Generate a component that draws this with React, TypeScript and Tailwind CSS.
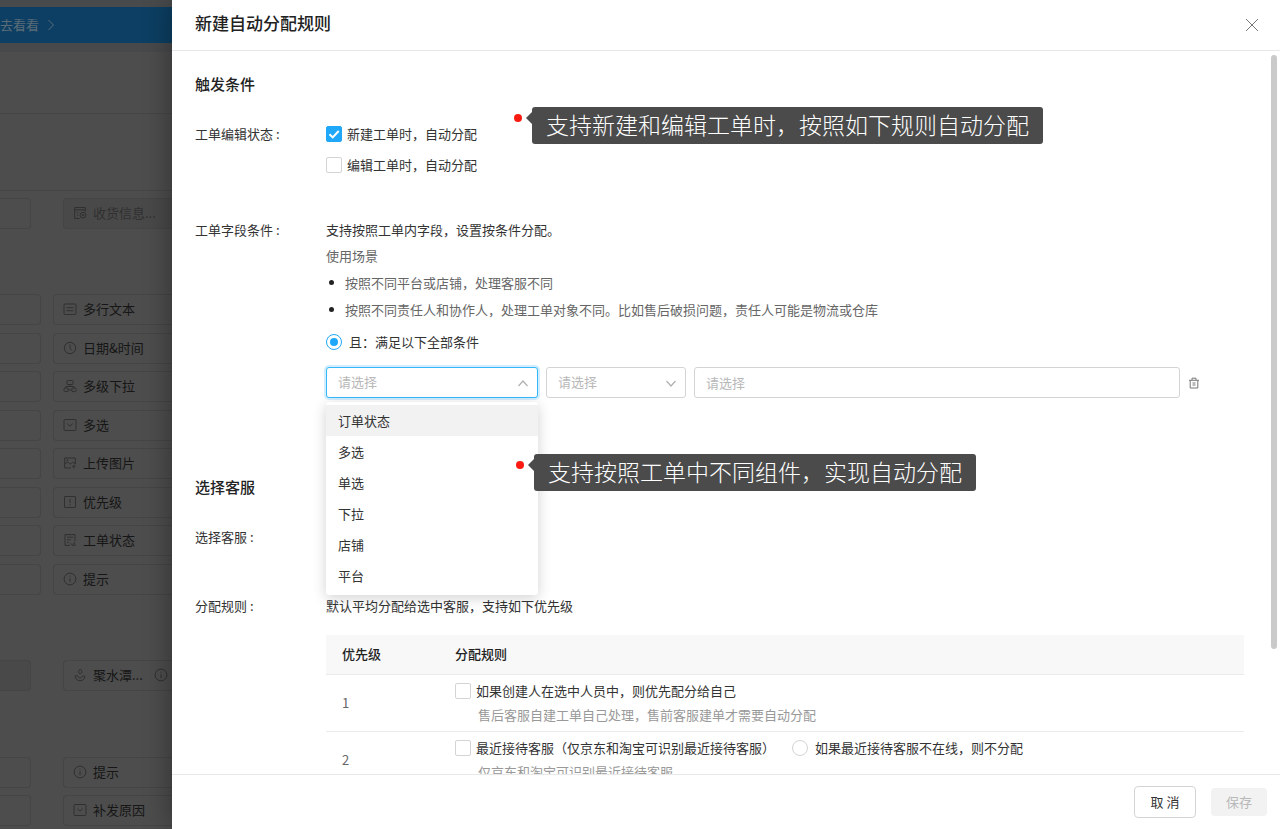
import React, { useState } from "react";

const iconPaths: Record<string, React.ReactNode> = {
  text: (
    <>
      <rect x="1" y="2" width="12" height="10.5" rx="1" />
      <path d="M3.5 5.7h7M3.5 8.7h7" />
    </>
  ),
  clock: (
    <>
      <circle cx="7" cy="7" r="5.7" />
      <path d="M7 3.5V7l1.8 2.4" />
    </>
  ),
  tree: (
    <>
      <rect x="4" y="1.5" width="6" height="4" rx="0.8" />
      <rect x="1" y="9" width="4.2" height="3.6" rx="1.2" />
      <rect x="8.8" y="9" width="4.2" height="3.6" rx="1.2" />
      <path d="M7 5.5v2M3.1 9V7.5h7.8V9M5.2 11h3.6" />
    </>
  ),
  multi: (
    <>
      <rect x="1" y="1.5" width="12" height="11" rx="1" />
      <path d="M4.2 5.6 7 8.2l2.8-2.6" />
    </>
  ),
  image: (
    <>
      <path d="M8 12H1.7V2h10.6v6.4" />
      <path d="M1.7 7.8 4.8 6l2.6 2.2L9.6 6.4l2.7 1M10.8 12.6V9.4M9.2 10.8l1.6-1.6 1.6 1.6" />
      <circle cx="4.3" cy="4.2" r="0.5" />
    </>
  ),
  priority: (
    <>
      <rect x="1.5" y="1.5" width="11" height="11" rx="0.5" />
      <path d="M7 3.8v4M7 9.2v1.2" />
    </>
  ),
  status: (
    <>
      <path d="M12 8V1.6H2v10.8h5" />
      <path d="M4 4.2h6M4 6.8h4M4 9.4h2M7.5 10.2l1.7 1.8 2.8-3" />
      <path d="M12 10.5v2H9.6" />
    </>
  ),
  info: (
    <>
      <circle cx="7" cy="7" r="5.9" />
      <path d="M7 6.2v4M7 3.8v1" />
    </>
  ),
  receive: (
    <>
      <path d="M12.300 5.500V1.500H1.700v11h5" />
      <path d="M1.700 3.900h10.600M4 6.500h1.200M4 9.200h1.200" />
      <circle cx="10" cy="9.200" r="2.900" />
      <circle cx="10" cy="9.200" r="0.800" />
    </>
  ),
  water: (
    <>
      <path d="M7.300 1c-1.400 1.500-1.900 2.500-1.700 3.400.3 1.500 2.900 1.500 3.300 0 .2-.9-.3-1.900-1.600-3.400Z" />
      <path d="M2.300 7.800c0 3 1.900 5 4.700 5s4.800-2 4.900-4.600c-1.600-.6-2.700-.1-3.300.9-.8 1.200-2.300 1.200-2.900 0C5.100 8 4 7.400 2.300 7.800Z" />
    </>
  ),
};

const FieldIcon = ({ name }: { name: string }) => (
  <svg
    viewBox="0 0 14 14"
    className="size-[14px] shrink-0 fill-none stroke-[#303030]"
    aria-hidden="true"
  >
    {iconPaths[name]}
  </svg>
);

const fields = [
  { name: "多行文本", icon: "text" },
  { name: "日期&时间", icon: "clock" },
  { name: "多级下拉", icon: "tree" },
  { name: "多选", icon: "multi" },
  { name: "上传图片", icon: "image" },
  { name: "优先级", icon: "priority" },
  { name: "工单状态", icon: "status" },
  { name: "提示", icon: "info" },
];

const options = ["订单状态", "多选", "单选", "下拉", "店铺", "平台"];

type FieldProps = {
  name: string;
  icon: string;
  disabled?: boolean;
  leftDisabled?: boolean;
  tip?: boolean;
};

// A pair of cards: the cut off left one and the one next to the drawer
const WideRow = ({ name, icon }: FieldProps) => (
  <div className="flex h-[31px] gap-3">
    <div className="w-[41px] shrink-0 rounded-r border border-l-0 border-[#454545]" />
    <div className="flex flex-1 items-center gap-[6px] rounded-l border border-r-0 border-[#454545] pb-px pl-[9px]">
      <FieldIcon name={icon} />
      <span className="whitespace-nowrap text-[#161616]">{name}</span>
    </div>
  </div>
);

const NarrowRow = ({ name, icon, disabled, leftDisabled, tip }: FieldProps) => (
  <div className="flex h-[31px] gap-8">
    <div
      className={`w-[31px] shrink-0 rounded-r border border-l-0 border-[#454545] ${leftDisabled ? "bg-[#494949]" : ""}`}
    />
    <div
      className={`flex flex-1 items-center gap-[6px] rounded-l border border-r-0 border-[#454545] pb-px pl-[9px] ${disabled ? "bg-[#494949]" : ""}`}
    >
      <FieldIcon name={icon} />
      <span
        className={`whitespace-nowrap ${disabled ? "text-[#303030]" : "text-[#161616]"}`}
      >
        {name}
      </span>
      {tip && (
        <span className="ml-[5px] flex">
          <FieldIcon name="info" />
        </span>
      )}
    </div>
  </div>
);

const Backdrop = () => (
  <aside className="flex w-[172px] shrink-0 flex-col overflow-hidden bg-[#4d4d4d]">
    <div className="h-[7px] shrink-0 bg-[#484a4c]" />
    <div className="flex h-9 shrink-0 items-center gap-2 bg-[#0c3f63] text-[#5b6c78]">
      <span>去看看</span>
      <svg viewBox="0 0 8 12" className="h-3 w-2 fill-none stroke-current">
        <path d="m1.5 1 5 5-5 5" />
      </svg>
    </div>
    <div className="h-[9px] shrink-0 bg-[#48494b]" />
    <div className="h-[61px] shrink-0" />
    <div className="h-[78px] shrink-0 border-y border-[#464646]" />
    <div className="flex flex-col pt-[7px]">
      <NarrowRow name="收货信息..." icon="receive" disabled />
      <div className="mt-[65px] flex h-[301px] flex-col justify-between">
        {fields.map((item) => (
          <WideRow key={item.name} {...item} />
        ))}
      </div>
      <div className="mt-[65px]">
        <NarrowRow name="聚水潭..." icon="water" leftDisabled tip />
      </div>
      <div className="mt-[66px] flex flex-col gap-[7px]">
        <NarrowRow name="提示" icon="info" />
        <NarrowRow name="补发原因" icon="multi" />
      </div>
    </div>
  </aside>
);

const Checkbox = ({
  label,
  defaultChecked,
}: {
  label: string;
  defaultChecked?: boolean;
}) => (
  <label className="flex items-center gap-[5px]">
    <span className="relative flex size-4">
      <input
        type="checkbox"
        defaultChecked={defaultChecked}
        className="peer size-4 appearance-none rounded-[2px] border border-[#d4d4d4] bg-white checked:border-[#1fa8fa] checked:bg-[#1fa8fa]"
      />
      <svg
        viewBox="0 0 16 16"
        className="pointer-events-none absolute inset-0 hidden size-4 fill-none stroke-white stroke-2 peer-checked:block"
      >
        <path d="m3.5 8.2 3.2 3.2 6-6.4" />
      </svg>
    </span>
    {label}
  </label>
);

const Radio = ({
  label,
  name,
  defaultChecked,
}: {
  label: string;
  name: string;
  defaultChecked?: boolean;
}) => (
  <label className="flex items-center gap-[7px]">
    <span className="relative flex size-4 items-center justify-center">
      <input
        type="radio"
        name={name}
        defaultChecked={defaultChecked}
        className="peer size-4 appearance-none rounded-full border border-[#d4d4d4] bg-white checked:border-[#1fa8fa]"
      />
      <span className="pointer-events-none absolute hidden size-2 rounded-full bg-[#1fa8fa] peer-checked:block" />
    </span>
    {label}
  </label>
);

const Note = ({ text }: { text: string }) => (
  <div className="flex items-start">
    <span className="mt-[7px] size-2 rounded-full bg-[#fb1a10]" />
    <svg viewBox="0 0 6 12" className="ml-1 mt-[5px] h-3 w-[6px] fill-[#4b4b4b]">
      <path d="M6 0v12L0 6Z" />
    </svg>
    <p className="whitespace-nowrap rounded-[3px] bg-[#4b4b4b] px-[14px] pb-[2px] text-[23px] font-light leading-[35px] text-white">
      {text}
    </p>
  </div>
);

const Chevron = ({ up }: { up?: boolean }) => (
  <svg
    viewBox="0 0 12 8"
    className="pointer-events-none absolute right-[9px] top-3 h-2 w-3 fill-none stroke-[#b0b0b0] stroke-[1.2]"
  >
    <path d={up ? "M1.500 7 6 2l4.500 5" : "M1.500 2 6 7l4.500-5"} />
  </svg>
);

const App = () => {
  const [active, setActive] = useState<string>("订单状态");

  return (
    <div className="flex h-screen overflow-hidden bg-[#4d4d4d] font-['Noto_Sans_CJK_SC',sans-serif] text-[13px] leading-[22px] text-[#333]">
      <Backdrop />

      <section className="relative flex min-w-0 flex-1 flex-col bg-white shadow-[-4px_0_24px_rgba(0,0,0,0.3)]">
        {/* Header */}
        <header className="flex h-[51px] shrink-0 items-center justify-between border-b border-[#e8e8e8] pl-[23px] pr-[22px]">
          <h1 className="pb-1 text-[17px] font-medium text-[#222]">
            新建自动分配规则
          </h1>
          <button aria-label="关闭">
            <svg viewBox="0 0 12 12" className="size-3 fill-none stroke-[#777]">
              <path d="m0 0 12 12M12 0 0 12" />
            </svg>
          </button>
        </header>

        {/* Body */}
        <main className="relative min-h-0 flex-1 overflow-hidden pl-[23px] pr-9 pt-[21px]">
          <h2 className="text-[15px] font-medium leading-6 text-[#222]">
            触发条件
          </h2>

          <div className="mt-[22px] flex">
            <span className="w-[131px] shrink-0 leading-[31px]">
              工单编辑状态 :
            </span>
            <div className="relative flex-1">
              <div className="flex h-[31px] items-center">
                <Checkbox label="新建工单时，自动分配" defaultChecked />
              </div>
              <div className="flex h-[31px] items-center">
                <Checkbox label="编辑工单时，自动分配" />
              </div>
              <div className="absolute -top-[11px] left-[188px]">
                <Note text="支持新建和编辑工单时，按照如下规则自动分配" />
              </div>
            </div>
          </div>

          <div className="mt-9 flex">
            <span className="w-[131px] shrink-0 leading-[27px]">
              工单字段条件 :
            </span>
            <div className="min-w-0 flex-1">
              <p className="leading-[27px]">
                支持按照工单内字段，设置按条件分配。
              </p>
              <div className="text-[#666]">
                <p className="leading-[26px]">使用场景</p>
                <ul className="leading-[27px]">
                  {[
                    "按照不同平台或店铺，处理客服不同",
                    "按照不同责任人和协作人，处理工单对象不同。比如售后破损问题，责任人可能是物流或仓库",
                  ].map((item) => (
                    <li key={item} className="flex items-center">
                      <span className="ml-[3px] mr-[11px] size-[5px] rounded-full bg-[#222]" />
                      {item}
                    </li>
                  ))}
                </ul>
              </div>
              <div className="mt-2 flex">
                <Radio label="且：满足以下全部条件" name="match" defaultChecked />
              </div>
              <div className="mt-[14px] flex h-[31px] items-center gap-2">
                <div className="relative h-full w-[212px] shrink-0">
                  <select
                    aria-label="字段"
                    className="block h-full w-full appearance-none rounded-[3px] border border-[#34b8fb] bg-white px-[11px] pb-px text-[#b8b8b8] shadow-[0_0_0_2px_rgba(31,168,250,0.2)] outline-none"
                  >
                    <option>请选择</option>
                  </select>
                  <Chevron up />
                  <ul
                    role="listbox"
                    aria-label="字段"
                    className="absolute left-0 top-[35px] z-10 w-full rounded-[3px] bg-white pb-1 pt-[3px] shadow-[0_3px_14px_rgba(0,0,0,0.18)]"
                  >
                    {options.map((item) => (
                      <li
                        key={item}
                        role="option"
                        aria-selected={item === active}
                        onMouseEnter={() => setActive(item)}
                        className={`cursor-pointer px-3 leading-[31px] ${item === active ? "bg-[#f2f2f2]" : ""}`}
                      >
                        {item}
                      </li>
                    ))}
                  </ul>
                  <div className="absolute left-[190px] top-[87px] z-20">
                    <Note text="支持按照工单中不同组件，实现自动分配" />
                  </div>
                </div>
                <div className="relative h-full w-[140px] shrink-0">
                  <select
                    aria-label="条件"
                    className="block h-full w-full appearance-none rounded-[3px] border border-[#d4d4d4] bg-white px-[11px] pb-px text-[#b8b8b8] outline-none"
                  >
                    <option>请选择</option>
                  </select>
                  <Chevron />
                </div>
                <input
                  aria-label="值"
                  placeholder="请选择"
                  className="h-full min-w-0 flex-1 rounded-[3px] border border-[#d4d4d4] px-[11px] pb-px outline-none placeholder:text-[#b8b8b8]"
                />
                <button aria-label="删除" className="mr-11">
                  <svg
                    viewBox="0 0 12 12"
                    className="size-3 fill-none stroke-[#777]"
                  >
                    <path d="M1 3.3h10M4 3V1.2h4V3M2.2 3.5V11h7.600V3.5M4.500 6h3M4.500 8h3" />
                  </svg>
                </button>
              </div>
            </div>
          </div>

          <h2 className="mt-[77px] text-[15px] font-medium leading-6 text-[#222]">
            选择客服
          </h2>
          <p className="mt-[27px]">选择客服 :</p>

          <div className="mt-[47px] flex">
            <span className="w-[131px] shrink-0">分配规则 :</span>
            <div className="min-w-0 flex-1">
              <p>默认平均分配给选中客服，支持如下优先级</p>
              <table className="mt-[18px] w-full table-fixed text-left">
                <thead>
                  <tr className="h-[39px] border-b border-[#ebebeb] bg-[#f8f8f8] text-[#222]">
                    <th className="w-[113px] pl-4 font-medium">优先级</th>
                    <th className="pl-4 font-medium">分配规则</th>
                  </tr>
                </thead>
                <tbody>
                  <tr className="h-[57px] border-b border-[#ebebeb]">
                    <td className="pl-4 text-[#666]">1</td>
                    <td className="pl-4">
                      <Checkbox label="如果创建人在选中人员中，则优先配分给自己" />
                      <p className="pl-[23px] pt-[2px] text-[#999]">
                        售后客服自建工单自己处理，售前客服建单才需要自动分配
                      </p>
                    </td>
                  </tr>
                  <tr className="h-[57px] border-b border-[#ebebeb]">
                    <td className="pl-4 text-[#666]">2</td>
                    <td className="pl-4">
                      <div className="flex gap-[17px]">
                        <Checkbox label="最近接待客服（仅京东和淘宝可识别最近接待客服）" />
                        <Radio label="如果最近接待客服不在线，则不分配" name="offline" />
                      </div>
                      <p className="pl-[23px] pt-[2px] text-[#999]">
                        仅京东和淘宝可识别最近接待客服
                      </p>
                    </td>
                  </tr>
                </tbody>
              </table>
            </div>
          </div>

          <div className="absolute right-[3px] top-1 h-[594px] w-[6px] rounded-full bg-[#cacaca]" />
        </main>

        {/* Footer */}
        <footer className="flex h-[55px] shrink-0 items-center justify-end gap-[15px] border-t border-[#e8e8e8] pr-[13px]">
          <button className="h-8 w-[62px] rounded border border-[#d4d4d4]">
            取 消
          </button>
          <button
            disabled
            className="h-7 w-14 rounded bg-[#f2f2f2] text-[#b8b8b8]"
          >
            保存
          </button>
        </footer>
      </section>
    </div>
  );
};

export default App;
